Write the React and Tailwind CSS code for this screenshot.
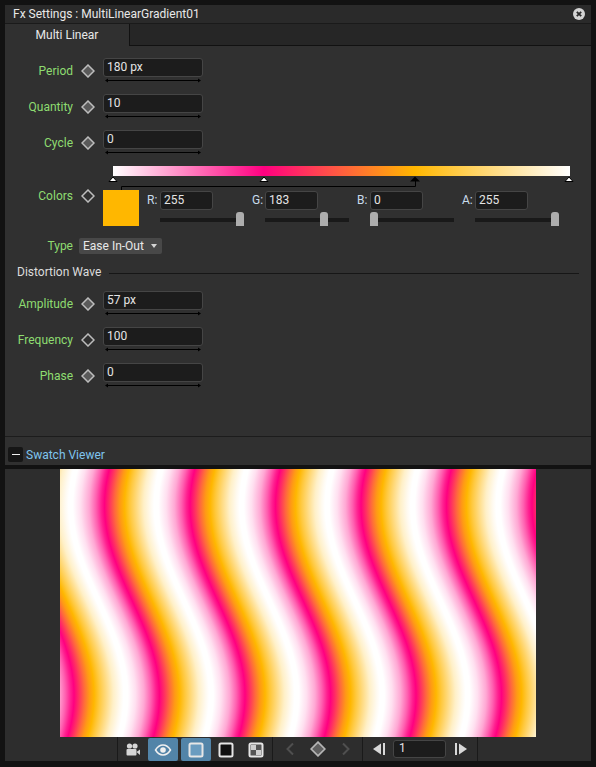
import React from 'react';

const FONT = { fontFamily: 'Roboto, "Noto Sans", sans-serif' };

// colours along one repeat of the wave, pink at 0
const WAVE_PERIOD = 85.5;
const WAVE_STOPS = [
  [0, '#ff0080'],
  [0.05, '#ff2a66'],
  [0.12, '#ff6a3c'],
  [0.18, '#ff9a15'],
  [0.235, '#ffb700'],
  [0.3, '#ffc93f'],
  [0.38, '#ffdc85'],
  [0.46, '#fff0c8'],
  [0.54, '#fffaf0'],
  [0.58, '#ffffff'],
  [0.63, '#ffffff'],
  [0.72, '#ffe0f0'],
  [0.82, '#ffa8d4'],
  [0.9, '#ff60b0'],
  [0.96, '#ff2090'],
  [1, '#ff0080'],
];

const waveOffset = (row) => {
  const y = row + 469;
  return 72 - 27.5 * Math.cos((2 * Math.PI * (y - 505)) / 380);
};

const WaveSwatch = () => {
  const rows = Array.from({ length: 268 }, (_, i) => i);
  return (
    <svg width="476" height="268" viewBox="0 0 476 268" className="block" shapeRendering="crispEdges">
      <defs>
        <linearGradient id="wave" gradientUnits="userSpaceOnUse" x1="0" y1="0" x2={WAVE_PERIOD} y2="0" spreadMethod="repeat">
          {WAVE_STOPS.map(([o, c]) => (
            <stop key={o} offset={o} stopColor={c} />
          ))}
        </linearGradient>
      </defs>
      {rows.map((r) => (
        <rect key={r} x="-400" y="0" width="1200" height="1" fill="url(#wave)" transform={`translate(${waveOffset(r)} ${r})`} />
      ))}
    </svg>
  );
};

const Diamond = ({ size = 14, stroke = '#bdbdbd', fill = '#5a5a5a' }) => (
  <svg width={size} height={size} viewBox="0 0 14 14" className="shrink-0">
    <path d="M7 1 L13 7 L7 13 L1 7 Z" fill={fill} stroke={stroke} strokeWidth="1.5" />
  </svg>
);

const ValueBox = ({ value, className }) => (
  <div className={`h-[19px] rounded-[3px] border border-[#454545] bg-[#1c1c1c] pl-[3px] text-[12px] leading-[16px] text-[#e4e4e4] ${className}`}>
    {value}
  </div>
);

const ArrowLine = () => (
  <svg width="96" height="5" viewBox="0 0 96 5" className="ml-[2px] mt-px block">
    <path d="M1 2.5 H95" stroke="#000" strokeWidth="1" />
    <path d="M0 2.5 L3 0.5 V4.5 Z M96 2.5 L93 0.5 V4.5 Z" fill="#000" />
  </svg>
);

const ParamRow = ({ label, value, hollow }) => (
  <div className="flex h-[36px] items-start">
    <div className="mt-[5px] w-[68px] text-right text-[12px] leading-[16px] text-[#8edc70]">{label}</div>
    <div className="ml-[8px] mt-[6px]">
      <Diamond fill={hollow ? '#303030' : '#5a5a5a'} />
    </div>
    <div className="ml-[8px] w-[100px]">
      <ValueBox value={value} className="w-full" />
      <ArrowLine />
    </div>
  </div>
);

const Channel = ({ label, value }) => (
  <div className="w-[98px]">
    <div className="flex h-[20px] items-center">
      <div className="w-[13px] text-[12px] leading-[16px] text-[#c9dcec]">{label}</div>
      <ValueBox value={value} className="w-[53px]" />
    </div>
    <div className="relative ml-[13px] mt-[8px] h-[4px] w-[84px] bg-[#191919]">
      <div
        className="absolute top-[-6px] h-[14px] w-[8px] rounded-t-[3px] bg-[#adadad]"
        style={{ left: `${(value / 255) * 76}px` }}
      />
    </div>
  </div>
);

const GradientHandles = () => (
  <svg width="470" height="26" viewBox="0 0 470 26" className="absolute left-[-5px] top-[10px]">
    <path d="M13.5 14 V10.5 H307.5 V4" fill="none" stroke="#000" strokeWidth="1" />
    {[5, 156, 461].map((x) => (
      <path key={x} d="M-4 5.5 L0 1 L4 5.5 Z" transform={`translate(${x} 0)`} fill="#fff" stroke="#000" strokeWidth="1" />
    ))}
    <path d="M-5 5.5 L0 0.5 L5 5.5 Z" transform="translate(307 0)" fill="#000" />
  </svg>
);

const ToolIcon = ({ children }) => (
  <svg width="18" height="18" viewBox="0 0 18 18" className="block">
    {children}
  </svg>
);

const ToolButton = ({ active, className, children }) => (
  <div className={`flex h-[23px] w-[30px] items-center justify-center rounded-[2px] ${active ? 'bg-[#5284a8]' : ''} ${className || ''}`}>
    {children}
  </div>
);

const FrameIcon = ({ fill }) => (
  <ToolIcon>
    <rect x="2.5" y="2.5" width="13" height="13" rx="1.5" fill={fill} stroke="#e6e6e6" strokeWidth="2" />
  </ToolIcon>
);

const Toolbar = () => (
  <div className="flex h-[24px] bg-[#2d2d2d] pl-[112px]">
    <div className="flex h-full items-stretch border-l border-[#1a1a1a]">
      <div className="flex items-end border-r border-[#1a1a1a] pr-[1px]">
        <ToolButton>
          <ToolIcon>
            <circle cx="5.5" cy="5" r="2.6" fill="#d6d6d6" />
            <circle cx="11" cy="5" r="2.6" fill="#d6d6d6" />
            <rect x="2.5" y="8" width="10" height="6.5" rx="1" fill="#d6d6d6" />
            <path d="M12.5 11 L16 8.5 V14 Z" fill="#d6d6d6" />
          </ToolIcon>
        </ToolButton>
        <ToolButton active>
          <ToolIcon>
            <path d="M1.5 9 C4 5 6.5 4 9 4 C11.5 4 14 5 16.5 9 C14 13 11.5 14 9 14 C6.5 14 4 13 1.5 9 Z" fill="none" stroke="#f0f0f0" strokeWidth="1.5" />
            <circle cx="9" cy="9" r="2.8" fill="#f0f0f0" />
          </ToolIcon>
        </ToolButton>
        <ToolButton active className="ml-[3px]">
          <FrameIcon fill="#6a9cc0" />
        </ToolButton>
        <ToolButton>
          <FrameIcon fill="#111" />
        </ToolButton>
        <ToolButton>
          <ToolIcon>
            <rect x="2.5" y="2.5" width="13" height="13" rx="1.5" fill="#555" stroke="#e6e6e6" strokeWidth="2" />
            <rect x="4" y="4" width="5" height="5" fill="#cfcfcf" />
            <rect x="9" y="9" width="5" height="5" fill="#cfcfcf" />
          </ToolIcon>
        </ToolButton>
      </div>
      <div className="flex w-[90px] items-center justify-between border-r border-[#1a1a1a] pl-[8px] pr-[7px]">
        <ToolIcon>
          <path d="M12 3.5 L6.5 9 L12 14.5" fill="none" stroke="#4f4f4f" strokeWidth="2" />
        </ToolIcon>
        <Diamond size={16} stroke="#b5b5b5" fill="#5f5f5f" />
        <ToolIcon>
          <path d="M6 3.5 L11.5 9 L6 14.5" fill="none" stroke="#4f4f4f" strokeWidth="2" />
        </ToolIcon>
      </div>
      <div className="flex w-[115px] items-center border-r border-[#1a1a1a] pl-[8px]">
        <ToolIcon>
          <path d="M2 9 L10 3.5 V14.5 Z" fill="#d8d8d8" />
          <rect x="12" y="3" width="2" height="12" fill="#d8d8d8" />
        </ToolIcon>
        <div className="ml-[4px] h-[18px] w-[53px] rounded-[3px] border border-[#454545] bg-[#1c1c1c] pl-[5px] text-[12px] leading-[15px] text-[#e4e4e4]">
          1
        </div>
        <div className="ml-[6px]">
          <ToolIcon>
            <rect x="3" y="3" width="2" height="12" fill="#d8d8d8" />
            <path d="M15 9 L7 3.5 V14.5 Z" fill="#d8d8d8" />
          </ToolIcon>
        </div>
      </div>
    </div>
  </div>
);

export default function App() {
  return (
    <div className="flex h-[767px] w-[596px] flex-col overflow-hidden bg-[#121212] pt-[5px]" style={FONT}>
      {/* Fx settings panel */}
      <div className="mx-[5px] flex h-[460px] flex-col bg-[#303030]">
        <div className="flex h-[18px] items-center justify-between bg-[#2a2a2a] pl-[8px] pr-[6px] text-[12px] leading-[16px] text-[#e8e8e8]">
          <span>Fx Settings : MultiLinearGradient01</span>
          <svg width="12" height="12" viewBox="0 0 12 12">
            <circle cx="6" cy="6" r="6" fill="#d4d4d4" />
            <path d="M3.8 3.8 L8.2 8.2 M8.2 3.8 L3.8 8.2" stroke="#2a2a2a" strokeWidth="1.8" />
          </svg>
        </div>
        <div className="flex h-[23px] border-t border-[#1a1a1a] bg-[#262626]">
          <div className="flex w-[125px] items-center justify-center border-r border-[#111] bg-[#303030] text-[12px] leading-[16px] text-[#e8e8e8]">
            Multi Linear
          </div>
          <div className="flex-1 border-b border-[#111]" />
        </div>

        <div className="flex-1 pt-[12px]">
          <ParamRow label="Period" value="180 px" />
          <ParamRow label="Quantity" value="10" />
          <ParamRow label="Cycle" value="0" />

          <div className="relative ml-[108px] h-[24px] w-[457px]">
            <div className="h-[10px] w-full bg-[linear-gradient(to_right,#ffffff,#ff0080_33%,#ffb700_66%,#ffffff)]" />
            <GradientHandles />
          </div>

          <div className="flex h-[48px] items-start">
            <div className="mt-[-2px] w-[68px] text-right text-[12px] leading-[16px] text-[#8edc70]">Colors</div>
            <div className="ml-[8px] mt-[-1px]">
              <Diamond fill="#303030" />
            </div>
            <div className="ml-[8px] h-[36px] w-[36px] bg-[#ffb700]" />
            <div className="ml-[8px] flex gap-[7px]">
              <Channel label="R:" value={255} />
              <Channel label="G:" value={183} />
              <Channel label="B:" value={0} />
              <Channel label="A:" value={255} />
            </div>
          </div>

          <div className="flex h-[25px] items-start">
            <div className="w-[68px] text-right text-[12px] leading-[16px] text-[#8edc70]">Type</div>
            <div className="ml-[6px] flex h-[16px] w-[83px] items-center justify-between rounded-[2px] bg-[#484848] pl-[4px] pr-[5px] text-[12px] leading-[16px] text-[#e8e8e8]">
              <span>Ease In-Out</span>
              <svg width="6" height="4" viewBox="0 0 6 4">
                <path d="M0 0 H6 L3 4 Z" fill="#d4d4d4" />
              </svg>
            </div>
          </div>

          <div className="flex h-[28px] items-start pl-[12px]">
            <span className="mt-px text-[12px] leading-[16px] text-[#dcdcdc]">Distortion Wave</span>
            <div className="ml-[8px] mr-[12px] mt-[10px] h-px flex-1 bg-[#161616]" />
          </div>

          <ParamRow label="Amplitude" value="57 px" />
          <ParamRow label="Frequency" value="100" hollow />
          <ParamRow label="Phase" value="0" />
        </div>

        <div className="flex h-[29px] items-end border-t border-[#1c1c1c] pb-[3px] pl-[3px]">
          <div className="flex h-[15px] w-[15px] items-center justify-center rounded-[2px] bg-[#161616]">
            <div className="h-px w-[8px] bg-[#f0f0f0]" />
          </div>
          <span className="mb-[-1px] ml-[3px] text-[12px] leading-[16px] text-[#7fc4ee]">Swatch Viewer</span>
        </div>
      </div>

      {/* preview panel */}
      <div className="mx-[5px] mt-[4px] flex flex-col bg-[#2d2d2d]">
        <div className="flex justify-center">
          <WaveSwatch />
        </div>
        <Toolbar />
      </div>
    </div>
  );
}
